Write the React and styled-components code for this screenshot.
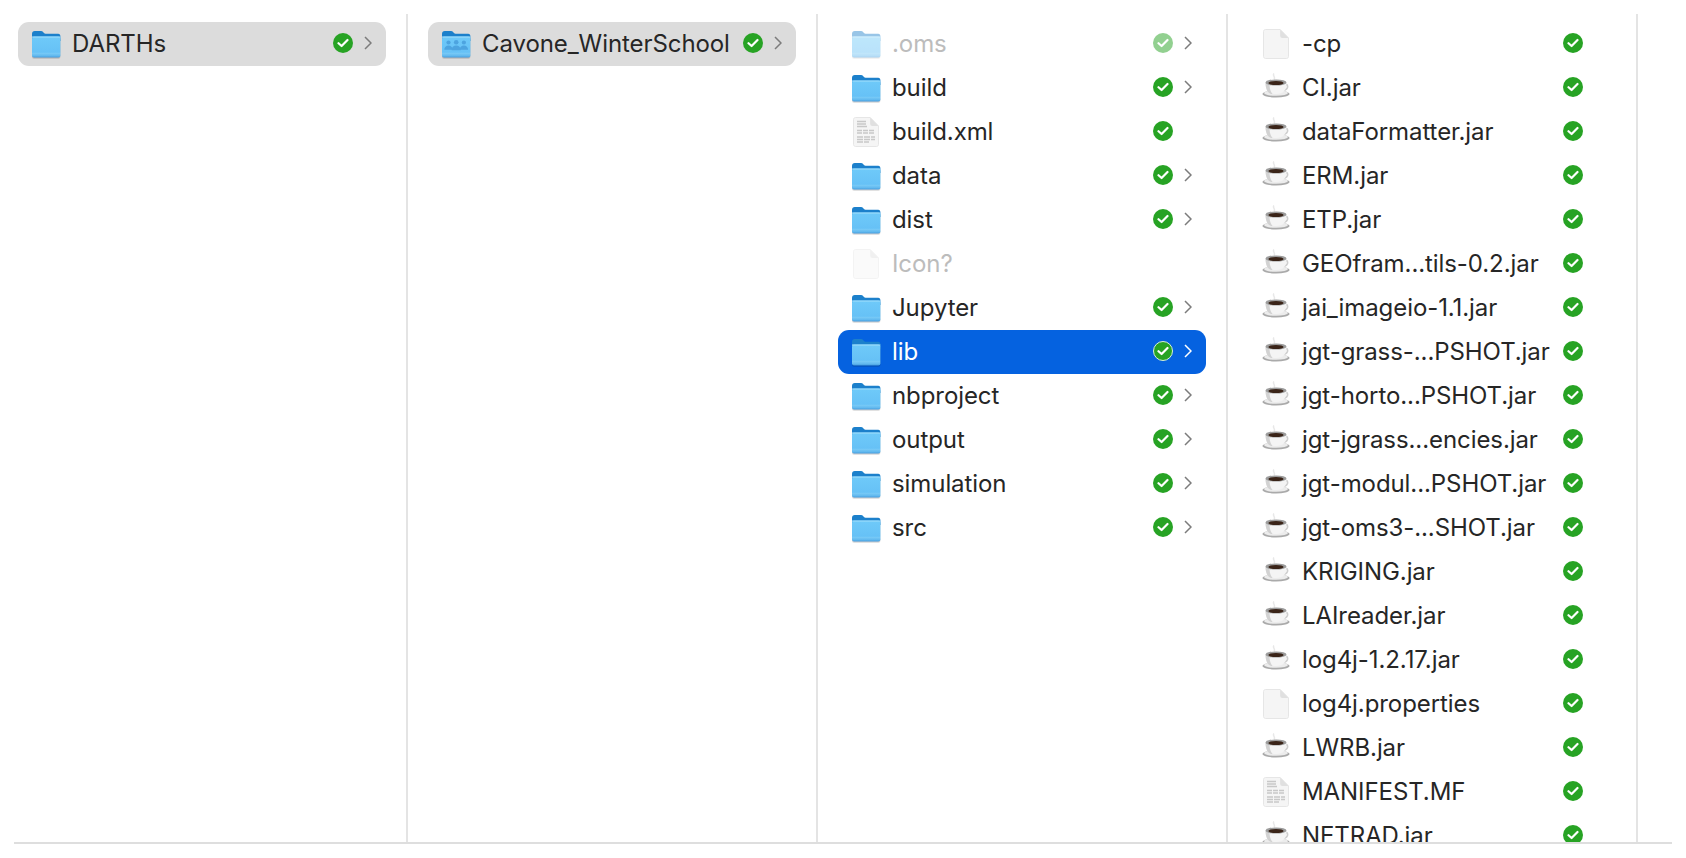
import React from 'react';
import styled, { createGlobalStyle } from 'styled-components';

const GlobalStyle = createGlobalStyle`
  body {
    margin: 0;
    background: #ffffff;
    font-family: Inter, "Liberation Sans", sans-serif;
  }
`;

const FolderGlyph = ({ shared }) => (
  <svg width="32" height="30" viewBox="0 0 32 30">
    <defs>
      <linearGradient id="folderFront" x1="0" y1="0" x2="0" y2="1">
        <stop offset="0" stopColor="#6fcaf9" />
        <stop offset="0.76" stopColor="#66c1f6" />
        <stop offset="0.77" stopColor="#7ccdf8" />
        <stop offset="0.93" stopColor="#5fb7ee" />
        <stop offset="1" stopColor="#4297d8" />
      </linearGradient>
    </defs>
    <path d="M2 5C2 3.100 3 2 4.800 2h6.400c1.200 0 1.800.9 2.600 1.800.5.6 1 .9 1.800.9h12.600c1.500 0 2.200 1 2.200 2.600V12H2z" fill="#1c80cb" />
    <rect x="2" y="8" width="28.400" height="21" rx="2" fill="#000" opacity="0.16" transform="translate(0 .8)" />
    <rect x="2" y="7.500" width="28.400" height="21" rx="2" fill="url(#folderFront)" />
    <rect x="2" y="7.500" width="28.400" height="1" fill="#a3e0fc" />
    {shared && (
      <g fill="#4da4e0">
        <circle cx="8.500" cy="13.500" r="2.100" />
        <circle cx="16.200" cy="13.200" r="2.300" />
        <circle cx="23.900" cy="13.500" r="2.100" />
        <path d="M4.300 20.800c0-2.700 1.800-4.400 4.200-4.400s4.200 1.700 4.200 4.400zM11.600 21.300c0-3 1.900-4.900 4.600-4.900s4.600 1.900 4.600 4.900zM19.700 20.800c0-2.700 1.800-4.400 4.200-4.400s4.200 1.700 4.200 4.400z" />
      </g>
    )}
  </svg>
);

const PageGlyph = ({ lined }) => (
  <svg width="28" height="30" viewBox="0 0 28 30">
    <path d="M1.500 2.500C1.500 1.400 2.400.5 3.500.5h14.700l8.300 8.400v18.600c0 1.100-.9 2-2 2h-21c-1.100 0-2-.9-2-2z" fill="#f5f5f5" stroke="#e6e6e6" />
    <path d="M18.200.5v6.400c0 1.100.9 2 2 2h6.300z" fill="#e0e0e0" />
    {lined && (
      <g stroke="#c8c8c8" strokeWidth="1.300">
        <path d="M5 4.500h9M5 7h9M5 9.500h10" />
        <path d="M5 13.500h18M5 16h18" strokeDasharray="5 1" />
        <path d="M5 20h18M5 22.500h18M5 25h12" strokeDasharray="6 1" />
      </g>
    )}
  </svg>
);

const CupGlyph = () => (
  <svg width="28" height="30" viewBox="0 0 28 30">
    <path d="M12 .5c-2 2 2 3.500 0 6" fill="none" stroke="#e8e8e8" strokeWidth="1.500" />
    <ellipse cx="14" cy="21" rx="13.500" ry="3.500" fill="#aaaaaa" />
    <ellipse cx="14" cy="20" rx="12" ry="2.800" fill="#ececec" />
    <path d="M21 11.500c5.500-2 6.500 4.500.5 6" fill="none" stroke="#cfcfcf" strokeWidth="1.700" />
    <path d="M3.500 9.500c0 7 2.500 11.500 10.500 11.500s10.500-4.500 10.500-11.500z" fill="#f4f4f4" />
    <path d="M3.500 9.500c0 7 2.500 11.500 7 11.500-2.500-3-3-7-3-10z" fill="#d2d2d2" />
    <ellipse cx="14" cy="9.500" rx="10.500" ry="3.100" fill="#9c9c9c" />
    <ellipse cx="14" cy="10" rx="7.600" ry="2" fill="#3a2418" />
  </svg>
);

const CheckBadge = ({ dimmed, ringed }) => (
  <Badge $dimmed={dimmed} $ringed={ringed}>
    <svg width="12" height="10" viewBox="0 0 12 10">
      <path d="M1.500 5.200 4.600 8 10.500 2" fill="none" stroke="#fff" strokeWidth="2.200" strokeLinecap="round" strokeLinejoin="round" />
    </svg>
  </Badge>
);

const Chevron = ({ light }) => (
  <ChevronBox>
    <svg width="8" height="14" viewBox="0 0 8 14">
      <path d="M1 1l6 6-6 6" fill="none" stroke={light ? '#ffffff' : '#7c7c7c'} strokeWidth="1.500" />
    </svg>
  </ChevronBox>
);

const icons = {
  folder: <FolderGlyph />,
  shared: <FolderGlyph shared />,
  page: <PageGlyph />,
  doc: <PageGlyph lined />,
  jar: <CupGlyph />
};

const Entry = ({ icon, name, active, selected, dimmed, noBadge, open }) => (
  <Row $active={active} $selected={selected}>
    <IconSlot $dimmed={dimmed}>{icons[icon]}</IconSlot>
    <Name $active={active} $dimmed={dimmed}>{name}</Name>
    <Status>{!noBadge && <CheckBadge dimmed={dimmed} ringed={active} />}</Status>
    <ChevronSlot>{open && <Chevron light={active} />}</ChevronSlot>
  </Row>
);

const projectItems = [
  { icon: 'folder', name: '.oms', dimmed: true, open: true },
  { icon: 'folder', name: 'build', open: true },
  { icon: 'doc', name: 'build.xml' },
  { icon: 'folder', name: 'data', open: true },
  { icon: 'folder', name: 'dist', open: true },
  { icon: 'page', name: 'Icon?', dimmed: true, noBadge: true },
  { icon: 'folder', name: 'Jupyter', open: true },
  { icon: 'folder', name: 'lib', active: true, open: true },
  { icon: 'folder', name: 'nbproject', open: true },
  { icon: 'folder', name: 'output', open: true },
  { icon: 'folder', name: 'simulation', open: true },
  { icon: 'folder', name: 'src', open: true }
];

const libItems = [
  ['page', '-cp'],
  ['jar', 'CI.jar'],
  ['jar', 'dataFormatter.jar'],
  ['jar', 'ERM.jar'],
  ['jar', 'ETP.jar'],
  ['jar', 'GEOfram...tils-0.2.jar'],
  ['jar', 'jai_imageio-1.1.jar'],
  ['jar', 'jgt-grass-...PSHOT.jar'],
  ['jar', 'jgt-horto...PSHOT.jar'],
  ['jar', 'jgt-jgrass...encies.jar'],
  ['jar', 'jgt-modul...PSHOT.jar'],
  ['jar', 'jgt-oms3-...SHOT.jar'],
  ['jar', 'KRIGING.jar'],
  ['jar', 'LAIreader.jar'],
  ['jar', 'log4j-1.2.17.jar'],
  ['page', 'log4j.properties'],
  ['jar', 'LWRB.jar'],
  ['doc', 'MANIFEST.MF'],
  ['jar', 'NETRAD.jar']
];

export default function App() {
  return (
    <>
      <GlobalStyle />
      <Browser>
        <Column $first>
          <Entry icon="folder" name="DARTHs" selected open />
        </Column>
        <Column>
          <Entry icon="shared" name="Cavone_WinterSchool" selected open />
        </Column>
        <Column>
          {projectItems.map(item => (
            <Entry key={item.name} {...item} />
          ))}
        </Column>
        <Column>
          {libItems.map(([icon, name]) => (
            <Entry key={name} icon={icon} name={name} />
          ))}
        </Column>
      </Browser>
    </>
  );
}

const Browser = styled.div`
  display: flex;
  height: 828px;
  margin: 14px 14px 0;
  border-bottom: 2px solid #dedede;
  overflow: hidden;
`;

const Column = styled.div`
  flex: none;
  box-sizing: border-box;
  width: ${p => (p.$first ? '394px' : '410px')};
  height: 100%;
  padding: 8px 20px 0 ${p => (p.$first ? '4px' : '20px')};
  border-right: 2px solid #e4e4e4;
  overflow: hidden;
`;

const Row = styled.div`
  display: flex;
  align-items: center;
  height: 44px;
  border-radius: 11px;
  background: ${p => (p.$active ? '#0562e0' : p.$selected ? '#dcdcdc' : 'transparent')};
`;

const IconSlot = styled.div`
  flex: none;
  display: flex;
  align-items: center;
  justify-content: center;
  width: 32px;
  height: 32px;
  margin: 0 8px 0 12px;
  opacity: ${p => (p.$dimmed ? 0.45 : 1)};
`;

const Name = styled.div`
  flex: 1;
  min-width: 0;
  padding: 0 0 2px 2px;
  font-size: 24px;
  letter-spacing: -0.08px;
  white-space: nowrap;
  color: ${p => (p.$active ? '#ffffff' : p.$dimmed ? '#bcbcbc' : '#262626')};
`;

const Status = styled.div`
  flex: none;
  display: flex;
  justify-content: center;
  width: 20px;
  height: 20px;
  margin-top: -2px;
`;

const Badge = styled.div`
  display: flex;
  align-items: center;
  justify-content: center;
  box-sizing: border-box;
  width: 20px;
  height: 20px;
  border-radius: 50%;
  background: #27a324;
  opacity: ${p => (p.$dimmed ? 0.5 : 1)};
  border: ${p => (p.$ringed ? '1px solid #d9f0d8' : 'none')};
`;

const ChevronSlot = styled.div`
  flex: none;
  width: 33px;
`;

const ChevronBox = styled.div`
  display: flex;
  justify-content: center;
  margin: -2px 3px 0 0;
`;
